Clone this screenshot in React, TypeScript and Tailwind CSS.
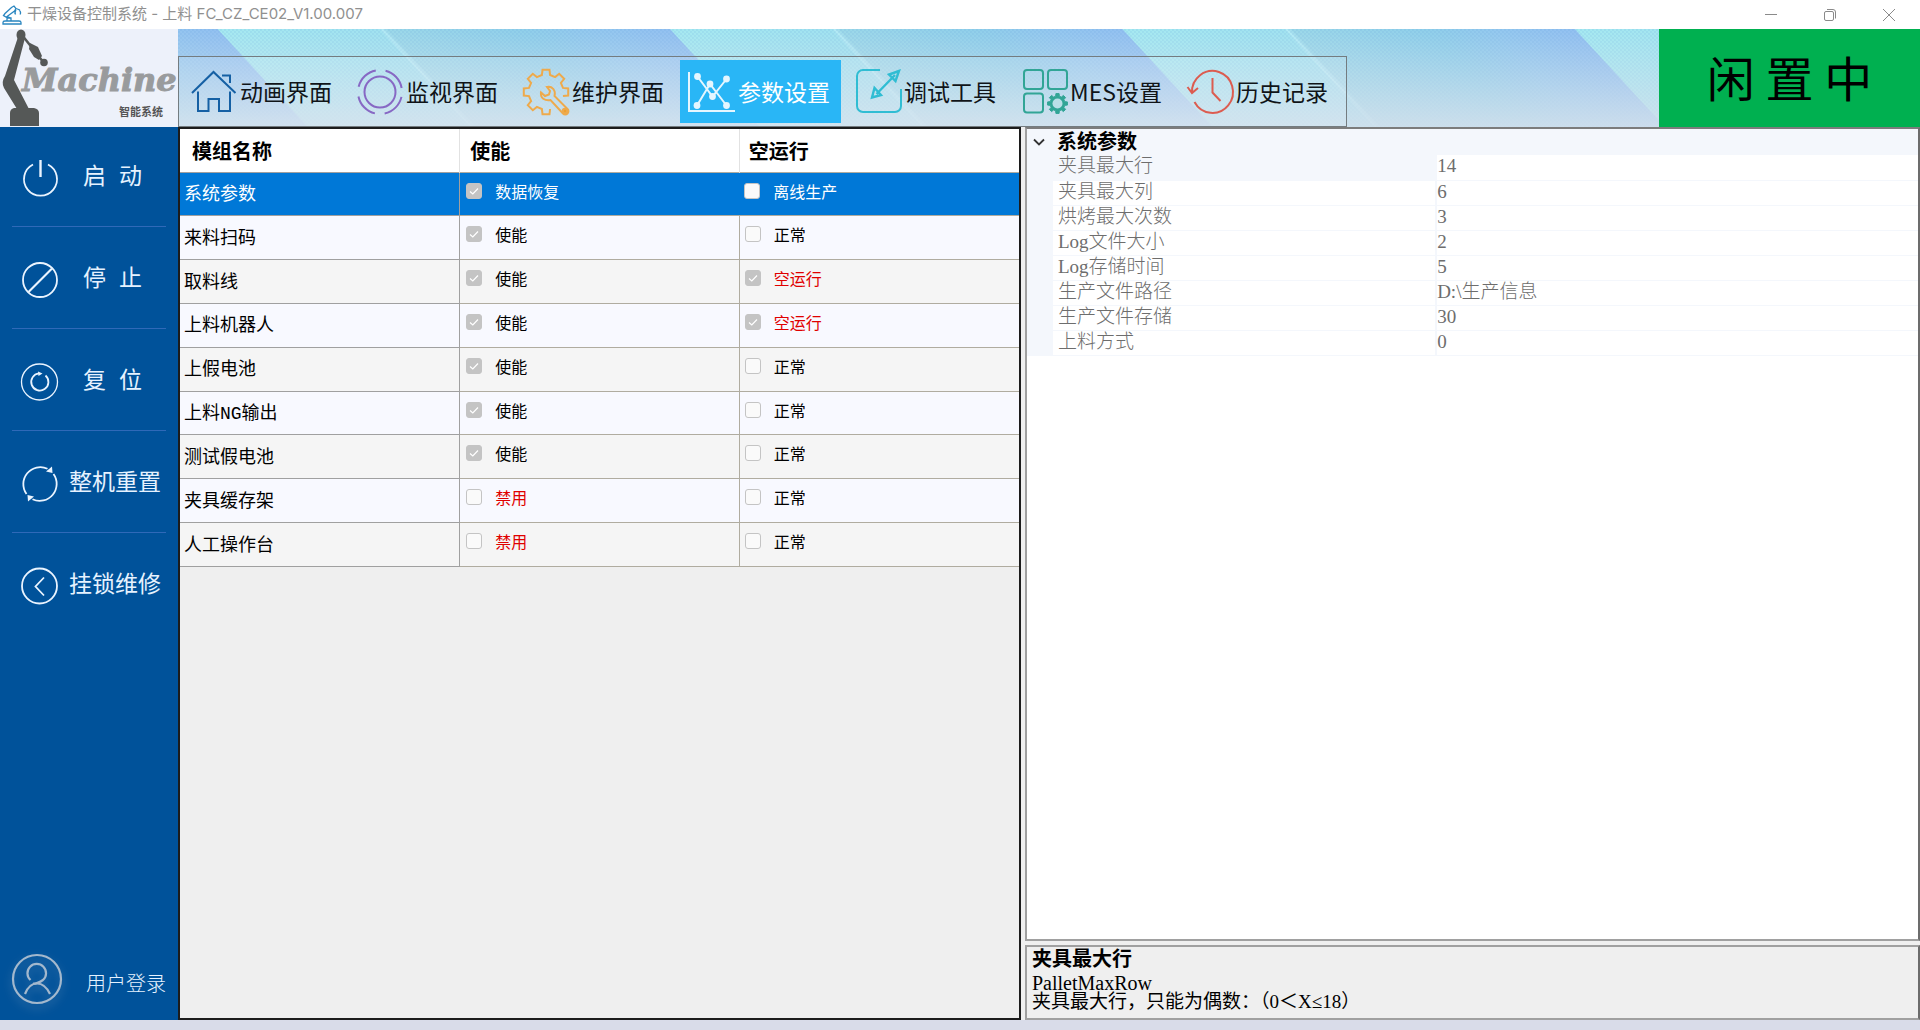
import { useState } from "react";
import type { ReactNode } from "react";

const SANS = "font-['Noto_Sans_CJK_SC',sans-serif]";
const SONG = "font-['Liberation_Serif','Noto_Sans_CJK_SC',serif]";

/** Outline of a cog with `teeth` teeth; `skip` leaves the path open at one tooth. */
function cogPoints(cx: number, cy: number, outer: number, inner: number, teeth: number, skip = false) {
  const pts: string[] = [];
  const step = 360 / teeth;
  for (let i = 0; i < teeth; i++) {
    const base = 45 + i * step;
    if (skip && i === 0) continue;
    const corners: [number, number][] = [
      [base - step * 0.3, inner],
      [base - step * 0.2, outer],
      [base + step * 0.2, outer],
      [base + step * 0.3, inner],
    ];
    for (const [deg, r] of corners) {
      const a = (deg * Math.PI) / 180;
      pts.push(`${(cx + r * Math.cos(a)).toFixed(1)},${(cy + r * Math.sin(a)).toFixed(1)}`);
    }
  }
  return pts.join(" ");
}

function NavIcon({ color, children }: { color: string; children: ReactNode }) {
  return (
    <svg viewBox="0 0 46 46" className="size-[46px] shrink-0 overflow-visible" fill="none" stroke={color} strokeWidth="2" aria-hidden="true">
      {children}
    </svg>
  );
}

const navItems: { label: string; icon: ReactNode }[] = [
  {
    label: "动画界面",
    icon: (
      <NavIcon color="#1560a4">
        <path d="M1 24 22.5 3 44.5 24M31 6.500H39V14M7 22.500V42H17.500V30H28V42H39V22.500" />
      </NavIcon>
    ),
  },
  {
    label: "监视界面",
    icon: (
      <NavIcon color="#8768c4">
        <circle cx="23" cy="23" r="15.500" />
        <circle cx="23" cy="23" r="22" strokeDasharray="24.560 10" strokeDashoffset="-5" />
      </NavIcon>
    ),
  },
  {
    label: "维护界面",
    icon: (
      <NavIcon color="#eeaa4c">
        <polyline points={cogPoints(23, 23, 22.5, 17.5, 8, true)} />
        <path d="M24 18C29 17 33 21 31.500 27L44.500 40A3 3 0 0 1 40 44.500L27.500 31C22 32 17 29 18 23.500L22 27 26 25.500 27 22Z" />
        <circle cx="42" cy="42" r="2.200" fill="#eea030" />
      </NavIcon>
    ),
  },
  {
    label: "参数设置",
    icon: (
      <NavIcon color="#e4f6ff">
        <path d="M0 3V42H46M8.500 7.500 23.500 27.500 37.500 10M8 36.500 21 15 37.500 36.500" />
        <g fill="#e4f6ff" stroke="none">
          <circle cx="8.500" cy="7.500" r="3.400" />
          <circle cx="37.500" cy="10" r="3.400" />
          <circle cx="21" cy="15" r="3.400" />
          <circle cx="23.500" cy="27.500" r="3.400" />
          <circle cx="8" cy="36.500" r="3.400" />
          <circle cx="37.500" cy="36.500" r="3.400" />
        </g>
      </NavIcon>
    ),
  },
  {
    label: "调试工具",
    icon: (
      <NavIcon color="#30bdd3">
        <path d="M25 1H8A6 6 0 0 0 2 7V37A6 6 0 0 0 8 43H40A6 6 0 0 0 46 37V20" />
        <path d="M21.500 25 40 6M44 2 34 5.500 40.500 12ZM17 28.500 19.500 19 26 26Z" strokeWidth="2.400" />
      </NavIcon>
    ),
  },
  {
    label: "MES设置",
    icon: (
      <NavIcon color="#31a596">
        <rect x="3" y="1" width="19" height="19" rx="3" />
        <rect x="27" y="1" width="19" height="19" rx="3" />
        <rect x="3" y="24.500" width="19" height="19" rx="3" />
        <polygon points={cogPoints(36.5, 34.5, 10, 7.5, 8)} fill="#31a596" strokeWidth="1" />
        <circle cx="36.500" cy="34.500" r="5" fill="#b9dfe8" stroke="none" />
      </NavIcon>
    ),
  },
  {
    label: "历史记录",
    icon: (
      <NavIcon color="#dc5c50">
        <path d="M5 24A20.500 21 0 1 1 7.500 33M0.500 18 5 24 11 19M25.500 9V23.500L33.500 32" />
      </NavIcon>
    ),
  },
];

function SideIcon({ children }: { children: ReactNode }) {
  return (
    <svg viewBox="0 0 36 36" className="size-9 shrink-0 overflow-visible" fill="none" stroke="#eaf4ff" strokeWidth="1.8" aria-hidden="true">
      {children}
    </svg>
  );
}

const sideItems: { label: string; spaced?: boolean; icon: ReactNode }[] = [
  {
    label: "启 动",
    spaced: true,
    icon: (
      <SideIcon>
        <path d="M11 4.500A16.500 16.500 0 1 0 26 4.500" />
        <path d="M18.500 0V17" strokeWidth="2.400" />
      </SideIcon>
    ),
  },
  {
    label: "停 止",
    spaced: true,
    icon: (
      <SideIcon>
        <circle cx="18" cy="18" r="17" />
        <path d="M6.500 30 30 6.500" strokeWidth="2.200" />
      </SideIcon>
    ),
  },
  {
    label: "复 位",
    spaced: true,
    icon: (
      <SideIcon>
        <circle cx="17.500" cy="18" r="18" strokeWidth="1.300" />
        <path d="M23.500 11.500A8.600 8.600 0 1 1 17 9.400" />
        <path d="M16 7.500 20.500 9.500 16.500 12Z" fill="#eaf4ff" stroke="none" />
      </SideIcon>
    ),
  },
  {
    label: "整机重置",
    icon: (
      <SideIcon>
        <path d="M4.500 28A17 17 0 0 1 25.500 2.700M31.500 8A17 17 0 0 1 10.500 33.300" />
        <path d="M24 5.500 30 0.500 30.500 7ZM12 30.500 6 35.500 5.500 29Z" fill="#eaf4ff" stroke="none" />
      </SideIcon>
    ),
  },
  {
    label: "挂锁维修",
    icon: (
      <SideIcon>
        <circle cx="17.500" cy="18" r="17.500" />
        <path d="M22 9.500 13.500 18.500 22 27.500" />
      </SideIcon>
    ),
  },
];

type Cell = { text: string; on: boolean; red?: boolean };
const on: Cell = { text: "使能", on: true };
const off: Cell = { text: "禁用", on: false, red: true };
const normal: Cell = { text: "正常", on: false };
const dry: Cell = { text: "空运行", on: true, red: true };

const modules: { name: string; enable: Cell; run: Cell }[] = [
  { name: "系统参数", enable: { text: "数据恢复", on: true }, run: { text: "离线生产", on: false } },
  { name: "来料扫码", enable: on, run: normal },
  { name: "取料线", enable: on, run: dry },
  { name: "上料机器人", enable: on, run: dry },
  { name: "上假电池", enable: on, run: normal },
  { name: "上料NG输出", enable: on, run: normal },
  { name: "测试假电池", enable: on, run: normal },
  { name: "夹具缓存架", enable: off, run: normal },
  { name: "人工操作台", enable: off, run: normal },
];

const params = [
  ["夹具最大行", "14"],
  ["夹具最大列", "6"],
  ["烘烤最大次数", "3"],
  ["Log文件大小", "2"],
  ["Log存储时间", "5"],
  ["生产文件路径", "D:\\生产信息"],
  ["生产文件存储", "30"],
  ["上料方式", "0"],
];

function CheckCell({ cell, selected }: { cell: Cell; selected: boolean }) {
  const color = selected ? "text-white" : cell.red ? "text-[#e00000]" : "text-black";
  return (
    <label className={`flex items-start gap-[13px] text-base leading-4 ${color}`}>
      <span className="relative size-4">
        <input
          type="checkbox"
          defaultChecked={cell.on}
          className="peer block size-4 appearance-none rounded-[3px] border border-[#c4c4c4] bg-[#fafafa] checked:bg-[#c4c4c4]"
        />
        <svg viewBox="0 0 16 16" className="pointer-events-none absolute inset-0 hidden size-4 peer-checked:block" fill="none" stroke="#fff" strokeWidth="1.2" aria-hidden="true">
          <path d="M4 8.500 6.800 11 12 5.500" />
        </svg>
      </span>
      {cell.text}
    </label>
  );
}

function TitleBar() {
  return (
    <header className="flex h-[29px] shrink-0 items-center bg-white text-[#909090]">
      <svg viewBox="0 0 20 20" className="ml-[2px] size-5" fill="none" stroke="#2a86c0" strokeWidth="1.3" aria-hidden="true">
        <path d="M1 19V17.500Q1 16 3 16H17Q19 16 19 17.500V19ZM5 16V13H9V16M5.500 13 1.500 10.500 3 8.500 9.500 2.500 12 1 14 3.500 12.500 6 5 11.500 9 13M14 3.500 18 5M13 6V9M17 5Q19.500 7 18 9.500M14 5Q12.500 7 13.500 9.500" />
      </svg>
      <h1 className="ml-[5px] grow pb-[2px] text-[15px] leading-5 font-['Inter','Noto_Sans_CJK_SC',sans-serif]">
        干燥设备控制系统 - 上料 FC_CZ_CE02_V1.00.007
      </h1>
      <div className="mr-[2px] flex">
        <button type="button" aria-label="最小化" className="flex h-[29px] w-[59px] items-center justify-center">
          <svg viewBox="0 0 12 12" className="size-3" stroke="#8a8a8a" aria-hidden="true"><path d="M0 5.500H12" /></svg>
        </button>
        <button type="button" aria-label="还原" className="flex h-[29px] w-[59px] items-center justify-center">
          <svg viewBox="0 0 12 12" className="size-3 overflow-visible" fill="none" stroke="#8a8a8a" aria-hidden="true">
            <rect x="0.500" y="2.500" width="9" height="9" rx="1.500" />
            <path d="M3 0.500H9Q11.500 0.500 11.500 3V9.500" />
          </svg>
        </button>
        <button type="button" aria-label="关闭" className="flex h-[29px] w-[59px] items-center justify-center">
          <svg viewBox="0 0 12 12" className="size-3 overflow-visible" stroke="#8a8a8a" aria-hidden="true"><path d="M0 0 12 12M12 0 0 12" /></svg>
        </button>
      </div>
    </header>
  );
}

function Logo() {
  return (
    <svg viewBox="0 0 178 98" className="h-[98px] w-[178px] shrink-0 bg-[#edf1fa]" role="img" aria-label="Machine 智能系统">
      <g fill="#555857" stroke="#555857">
        <path d="M10 97V84Q10 80 14 79H34Q39 80 39 84V97Z" stroke="none" />
        <path d="M5 47 18 8 25 9 14 51 29 80H17L4 59Q1 53 5 47Z" stroke="none" />
        <ellipse cx="21" cy="6" rx="4.500" ry="5.500" stroke="none" />
        <path d="M22 6 44 34" strokeWidth="2.500" />
        <path d="M30 14 38 18 42 27 39 31 34 28 29 20Z" stroke="none" />
        <circle cx="44" cy="33.500" r="3.800" stroke="none" />
      </g>
      <text x="22" y="62" fontSize="32" fontWeight="700" fontStyle="italic" fontFamily="DejaVu Serif, serif" fill="#999b9d" stroke="#999b9d" strokeWidth="1">Machine</text>
      <text x="119" y="87" fontSize="11" fontWeight="700" fontFamily="Noto Sans CJK SC, sans-serif" fill="#555">智能系统</text>
    </svg>
  );
}

export default function App() {
  const [active, setActive] = useState("参数设置");
  const [open, setOpen] = useState(true);

  return (
    <div lang="zh-CN" className={`flex min-h-screen flex-col bg-[#d9dce9] ${SANS}`}>
      <TitleBar />

      <div className="flex h-[98px] shrink-0">
        <Logo />
        <div className="flex grow items-end bg-[image:linear-gradient(to_bottom,rgba(210,224,236,0)_0%,rgba(210,224,236,0.9)_100%),repeating-conic-gradient(rgba(90,150,210,0.12)_0_25%,transparent_0_50%),repeating-linear-gradient(47.4deg,#a5e9f1_96px,#a0e2f0_214px,#b4ecf6_216px,#9bd8e9_220px,#8fcfea_320px,#93c8ef_370px,#92c0f1_428px,#a5e9f1_429px)] bg-[size:auto,4px_4px,auto]">
          <nav className="flex h-[71px] gap-[5px] border border-[#747c80] bg-white/10 py-[3px] pr-[7px] pl-[3px]">
            {navItems.map((item) => (
              <button
                key={item.label}
                type="button"
                onClick={() => setActive(item.label)}
                aria-current={active === item.label ? "page" : undefined}
                className={`flex h-[63px] w-[161px] items-center gap-[3px] pl-[9px] text-[23px] leading-8 whitespace-nowrap ${
                  active === item.label ? "bg-[#29b6f6] text-white" : "text-[#101418]"
                }`}
              >
                {item.icon}
                <span className="pb-[2px]">{item.label}</span>
              </button>
            ))}
          </nav>
        </div>
        <div role="status" className="flex w-[261px] shrink-0 items-center justify-center bg-[#00b050] pb-1 text-5xl text-black">
          闲 置 中
        </div>
      </div>

      <div className="flex grow">
        <aside className="flex w-[178px] shrink-0 flex-col bg-[#00529a] pb-4 text-[#e6f2ff]">
          <ul className="flex flex-col gap-[35px] pt-[33px]">
            {sideItems.map((item, i) => (
              <li key={item.label} className={`mx-3 pb-[30px] ${i < sideItems.length - 1 ? "border-b border-[#2f69b8]" : ""}`}>
                <button
                  type="button"
                  className={`flex h-9 w-full items-start pl-[10px] text-[23px] leading-7 whitespace-pre ${item.spaced ? "gap-[25px]" : "gap-[11px]"}`}
                >
                  {item.icon}
                  {item.spaced ? (
                    <span className="flex gap-[13px]">
                      {item.label.split(" ").map((c) => (
                        <span key={c}>{c}</span>
                      ))}
                    </span>
                  ) : (
                    <span>{item.label}</span>
                  )}
                </button>
              </li>
            ))}
          </ul>
          <button type="button" className="mt-auto ml-3 flex items-center gap-6 text-xl font-light">
            <svg viewBox="0 0 50 50" className="size-[50px] overflow-visible drop-shadow-[0_4px_4px_rgba(160,180,200,0.4)]" fill="none" stroke="#a3b8cd" strokeWidth="2.2" aria-hidden="true">
              <circle cx="25" cy="25" r="24" />
              <path d="M18.500 26A9.300 9.300 0 1 1 31 26Q25 30 21 29.500" />
              <path d="M13 40Q17 29.500 25 29.500T38 40" />
            </svg>
            <span className="pt-2">用户登录</span>
          </button>
        </aside>

        <main className="grid grow grid-cols-[843fr_899fr] bg-[#efefef]">
          <section className="border-2 border-[#1c1c1c] bg-[#efefef]">
            <table className="h-[438px] w-full table-fixed border-collapse">
              <thead>
                <tr className="h-[43px] bg-white text-left text-xl">
                  <th className="border-r border-[#e2e2e2] pt-[2px] pl-3">模组名称</th>
                  <th className="border-r border-[#e2e2e2] pt-[2px] pl-[10px]">使能</th>
                  <th className="pt-[2px] pl-[9px]">空运行</th>
                </tr>
              </thead>
              <tbody>
                {modules.map((m, i) => {
                  const selected = i === 0;
                  const bg = selected ? "bg-[#0078d7]" : i % 2 ? "bg-[#f8f9ff]" : "bg-[#f5f5f5]";
                  return (
                    <tr key={m.name} className={bg}>
                      <td
                        className={`border-y border-r border-[#a0a0a0] pt-[2px] pl-1 text-lg leading-6 font-['Liberation_Mono','Noto_Sans_CJK_SC',monospace] ${
                          selected ? "text-white" : "text-black"
                        }`}
                      >
                        {m.name}
                      </td>
                      <td className={`border-y border-[#b0aca0] pt-[10px] pl-[6px] align-top ${selected ? "" : "border-r"}`}>
                        <CheckCell cell={m.enable} selected={selected} />
                      </td>
                      <td className="border-y border-[#b0aca0] pt-[10px] pl-[5px] align-top">
                        <CheckCell cell={m.run} selected={selected} />
                      </td>
                    </tr>
                  );
                })}
              </tbody>
            </table>
          </section>

          <section className={`flex flex-col gap-1 pl-1 ${SONG} text-[19px]`}>
            <div className="grow border-2 border-[#a0a0a0] border-t-[#7c7c7c] border-r-[#6c6c6c] bg-white">
              <table className="w-full table-fixed border-collapse bg-[#f4f7fc] text-left">
                <colgroup>
                  <col className="w-[26px]" />
                  <col className="w-[43%]" />
                  <col />
                </colgroup>
                <thead>
                  <tr className="h-[26px]">
                    <th className="p-0">
                      <button type="button" aria-label="展开系统参数" aria-expanded={open} onClick={() => setOpen(!open)} className="flex h-6 w-6 items-center justify-center">
                        <svg viewBox="0 0 12 8" className="h-2 w-3" fill="none" stroke="#333" strokeWidth="1.800" aria-hidden="true">
                          <path d="M1 1.500 6 6.500 11 1.500" />
                        </svg>
                      </button>
                    </th>
                    <th colSpan={2} className="p-0 pl-1 text-xl leading-6 font-bold">系统参数</th>
                  </tr>
                </thead>
                {open && (
                  <tbody className="text-[#6d6d6d]">
                    {params.map(([name, value], i) => (
                      <tr key={name} className="h-[25px]">
                        <td />
                        <th scope="row" className={`border-b border-[#f4f7fc] p-0 pb-[2px] pl-[5px] leading-[22px] font-light ${i === 0 ? "" : "bg-white"}`}>{name}</th>
                        <td className="border-b border-l-2 border-[#f4f7fc] bg-white p-0 pb-[2px]">
                          <input aria-label={name} defaultValue={value} readOnly className="block h-[22px] w-full bg-transparent leading-[22px] font-light outline-none" />
                        </td>
                      </tr>
                    ))}
                  </tbody>
                )}
              </table>
            </div>
            <div className="h-[75px] shrink-0 border-2 border-[#a0a0a0] border-r-[#6c6c6c] bg-[#efefef] pl-[5px] text-black">
              <h2 className="text-xl leading-6 font-bold">夹具最大行</h2>
              <p className="pt-[2px] text-xl leading-5">PalletMaxRow</p>
              <p className="leading-[18px]">夹具最大行，只能为偶数：（0＜X≤18）</p>
            </div>
          </section>
        </main>
      </div>
      <div className="h-[10px] shrink-0" />
    </div>
  );
}
